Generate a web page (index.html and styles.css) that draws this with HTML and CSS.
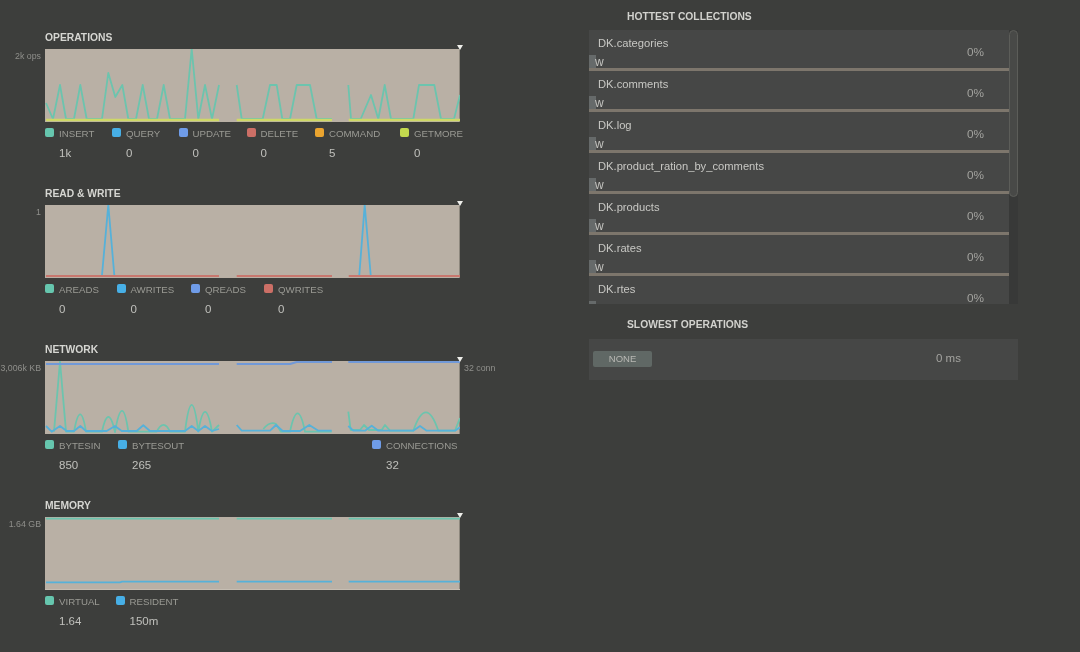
FILE: index.html
```html
<!DOCTYPE html>
<html lang="en">
<head>
<meta charset="UTF-8" />
<title>Monitoring</title>
<link rel="stylesheet" href="styles.css">
</head>
<body>
<div class="page">
  <div class="charts">

    <section class="metric">
      <h2>OPERATIONS</h2>
      <div class="plot">
        <span class="axis">2k ops</span>
        <i class="marker"></i>
        <svg class="graph" viewBox="45 49 415 73">
          <path class="edge" d="M459.5 49V122"/>
          <path class="teal" d="M46 103L53 119L60 85L66 119H74L80.300 85L86.700 119H102L108.300 73L115.300 97L122.300 85L128.300 119H136L142.700 85L149 119H157L163.700 85L170 119H185L191.700 49L198.300 119L205 85L212 119L219 85"/>
          <path class="teal" d="M236.700 85L241.700 119H262.700L270 85H276.700L282.300 119H290L296.700 85H310L316.700 119H332"/>
          <path class="teal" d="M348.300 85L351 119H360.700L371 95L378.300 119L384.700 85L391 119H413.300L419 85H434.300L441 119H454L460 95"/>
          <path class="yellow" d="M46 120H219M236.700 120H332M348.700 120H460"/>
        </svg>
      </div>
      <div class="legend legend-ops">
        <div class="item"><p><b class="sw-teal"></b>INSERT</p><span>1k</span></div>
        <div class="item"><p><b class="sw-sky"></b>QUERY</p><span>0</span></div>
        <div class="item"><p><b class="sw-blue"></b>UPDATE</p><span>0</span></div>
        <div class="item"><p><b class="sw-red"></b>DELETE</p><span>0</span></div>
        <div class="item"><p><b class="sw-orange"></b>COMMAND</p><span>5</span></div>
        <div class="item"><p><b class="sw-lime"></b>GETMORE</p><span>0</span></div>
      </div>
    </section>

    <section class="metric">
      <h2>READ &amp; WRITE</h2>
      <div class="plot">
        <span class="axis">1</span>
        <i class="marker"></i>
        <svg class="graph" viewBox="45 205 415 73">
          <path class="edge" d="M459.500 205V278"/>
          <path class="sky" d="M102 275L108.300 205L114.300 275M359.300 275L364.700 205L370.700 275"/>
          <path class="red" d="M46 276H219M236.700 276H332M348.700 276H460"/>
        </svg>
      </div>
      <div class="legend legend-rw">
        <div class="item"><p><b class="sw-teal"></b>AREADS</p><span>0</span></div>
        <div class="item"><p><b class="sw-sky"></b>AWRITES</p><span>0</span></div>
        <div class="item"><p><b class="sw-blue"></b>QREADS</p><span>0</span></div>
        <div class="item"><p><b class="sw-red"></b>QWRITES</p><span>0</span></div>
      </div>
    </section>

    <section class="metric">
      <h2>NETWORK</h2>
      <div class="plot">
        <span class="axis">3,006k KB</span>
        <span class="axis-right">32 conn</span>
        <i class="marker"></i>
        <svg class="graph" viewBox="45 361 415 73">
          <path class="edge" d="M459.500 361V434"/>
          <path class="teal" d="M54 431.700L60 361.700L66 431.700H74Q80.300 397 86 431.700H102Q108.300 402 115 432Q122.300 390 128.300 431.700H156.700Q163.700 418 170 431.700H185Q191.700 378 198.300 431.700Q205 392 212 431.700L219 425"/>
          <path class="teal" d="M263.300 429Q270 421 276 424L281 431.700H290Q297.700 395 305 431.700H331.700"/>
          <path class="teal" d="M348.300 411.700L350.700 430H360L364 425L369 430H381.700L385 425L390 430.700H413.300Q426 394 438.300 430.700H455L460 418"/>
          <path class="sky" d="M46 426L51.700 431.700L60 426L66.700 431H74L80.300 426L86 431H106.700L115 426L121.700 431H136.700L143.300 425.300L150 431H185L191.700 426L198.300 431L205 426L212 431L219 429"/>
          <path class="sky" d="M236.700 425L241.700 430.700H270L276 425L282.700 431H300L309.300 425L318.300 430.700H331.700"/>
          <path class="sky" d="M348.300 426L353.300 430.700H365L371.700 425.700L378.300 430.700H413.300L420 426L426.700 430.700H455L460 427.300"/>
          <path class="blue" d="M46 364H219M236.700 364H290L296.700 362H332M348.300 362H460"/>
        </svg>
      </div>
      <div class="legend legend-net">
        <div class="item"><p><b class="sw-teal"></b>BYTESIN</p><span>850</span></div>
        <div class="item"><p><b class="sw-sky"></b>BYTESOUT</p><span>265</span></div>
        <div class="item"><p><b class="sw-blue"></b>CONNECTIONS</p><span>32</span></div>
      </div>
    </section>

    <section class="metric">
      <h2>MEMORY</h2>
      <div class="plot">
        <span class="axis">1.64 GB</span>
        <i class="marker"></i>
        <svg class="graph" viewBox="45 517 415 73">
          <path class="edge" d="M459.500 517V590"/>
          <path class="edge-low" d="M45 589.500H460"/>
          <path class="teal" d="M46 518.700H219M236.700 518.700H332M348.700 518.700H460"/>
          <path class="sky" d="M46 582.300H120L122 581.700H219M236.700 581.700H332M348.700 581.700H460"/>
        </svg>
      </div>
      <div class="legend legend-mem">
        <div class="item"><p><b class="sw-teal"></b>VIRTUAL</p><span>1.64</span></div>
        <div class="item"><p><b class="sw-sky"></b>RESIDENT</p><span>150m</span></div>
      </div>
    </section>

  </div>

  <div class="side">
    <h2 class="side-title">HOTTEST COLLECTIONS</h2>
    <div class="hot">
      <div class="rows">
        <div class="row"><div><p class="name">DK.categories</p><p class="lock"><i></i>w</p></div><span class="pct">0%</span></div>
        <div class="row"><div><p class="name">DK.comments</p><p class="lock"><i></i>w</p></div><span class="pct">0%</span></div>
        <div class="row"><div><p class="name">DK.log</p><p class="lock"><i></i>w</p></div><span class="pct">0%</span></div>
        <div class="row"><div><p class="name">DK.product_ration_by_comments</p><p class="lock"><i></i>w</p></div><span class="pct">0%</span></div>
        <div class="row"><div><p class="name">DK.products</p><p class="lock"><i></i>w</p></div><span class="pct">0%</span></div>
        <div class="row"><div><p class="name">DK.rates</p><p class="lock"><i></i>w</p></div><span class="pct">0%</span></div>
        <div class="row"><div><p class="name">DK.rtes</p><p class="lock"><i></i>w</p></div><span class="pct">0%</span></div>
      </div>
      <div class="track"><div class="thumb"></div></div>
    </div>

    <h2 class="side-title slow-title">SLOWEST OPERATIONS</h2>
    <div class="slow">
      <span class="none">NONE</span>
      <span class="ms">0 ms</span>
    </div>
  </div>
</div>
</body>
</html>
```

FILE: styles.css
```css
html, body { margin: 0; height: 652px; overflow: hidden; }
body { font-family: "Liberation Sans", Arial, sans-serif; background: #3d3e3c; color: #bdbdb9; }
h2, p { margin: 0; }
/* the capture is a little soft, so the whole page gets a faint blur */
.page { display: flex; filter: blur(0.4px); }

/* left column */
.charts { width: 589px; box-sizing: border-box; padding: 32px 0 0 45px; }
.metric { height: 156px; }
.metric h2 { font-size: 10.300px; line-height: 12px; color: #d6d6d2; margin-bottom: 5px; }
.plot { position: relative; width: 415px; height: 73px; }
.graph { display: block; width: 415px; height: 73px; background: #b9b0a5; }
.graph path { fill: none; stroke-linejoin: round; }
.axis { position: absolute; right: 419px; top: 2px; font-size: 8.800px; line-height: 10px; color: #8f8f8b; white-space: nowrap; }
.axis-right { position: absolute; left: 419px; top: 2px; font-size: 8.800px; line-height: 10px; color: #8f8f8b; white-space: nowrap; }
.marker { position: absolute; left: 412px; top: -4px; width: 0; height: 0; border: 3px solid transparent; border-top: 5px solid #eeeeea; border-bottom: 0; }

.edge { stroke: #8d877d; stroke-width: 1; }
.edge-low { stroke: #c6beb3; stroke-width: 1; }
.teal { stroke: #6cc4ae; stroke-width: 1.800; }
.sky { stroke: #56b1d9; stroke-width: 1.800; }
.blue { stroke: #7199d8; stroke-width: 2; }
.red { stroke: #c8776e; stroke-width: 2.200; }
.yellow { stroke: #cfd867; stroke-width: 2.600; }

.legend { display: grid; margin-top: 6px; }
.legend-ops { grid-template-columns: 67px 66.500px 68px 68.500px 85px 1fr; }
.legend-rw { grid-template-columns: 71.500px 74.500px 73px 1fr; }
.legend-net { grid-template-columns: 73px 254px 1fr; }
.legend-mem { grid-template-columns: 70.500px 1fr; }
.item p { display: flex; align-items: center; font-size: 9.700px; line-height: 11px; color: #9a9a94; white-space: nowrap; }
.item b { width: 9px; height: 9px; border-radius: 2px; margin-right: 5px; margin-top: -2px; }
.item span { display: block; margin: 8px 0 0 14px; font-size: 11.500px; line-height: 12px; color: #c0c0bc; }
.sw-teal { background: #66c6ae; }
.sw-sky { background: #47afe6; }
.sw-blue { background: #6f9ce8; }
.sw-red { background: #cc6f66; }
.sw-orange { background: #eaa42f; }
.sw-lime { background: #c3d94e; }

/* right column */
.side { width: 429px; padding-top: 11px; }
.side-title { font-size: 10.300px; line-height: 12px; color: #d2d2ce; padding-left: 38px; }
.hot { display: flex; height: 274px; margin-top: 7px; overflow: hidden; }
.rows { width: 420px; background: #464746; }
.row { display: flex; justify-content: space-between; height: 38px; border-bottom: 3px solid #7d766c; }
.name { font-size: 11.200px; line-height: 13px; color: #c8c8c4; padding: 7px 0 0 9px; }
.lock { display: flex; height: 13px; margin-top: 5px; font-size: 12px; line-height: 15px; color: #c4c4c0; }
.lock i { width: 7px; height: 13px; margin-right: -1px; background: #666a6a; }
.pct { margin: 16px 25px 0 0; font-size: 11.800px; line-height: 13px; color: #a2a29e; }
.track { width: 9px; background: #383938; }
.thumb { box-sizing: border-box; height: 167px; background: #484947; border: 1px solid #5c5d59; border-radius: 5px; }

.slow-title { margin-top: 15px; }
.slow { display: flex; align-items: flex-start; height: 29px; margin-top: 8px; background: #464746; padding: 12px 0 0 4px; }
.none { width: 59px; height: 16px; margin-right: 284px; background: #606865; border-radius: 2px; font-size: 9.500px; line-height: 16px; text-align: center; color: #b8b8b4; }
.ms { margin-top: 1px; font-size: 11.500px; line-height: 13px; color: #a4a4a0; }
```
